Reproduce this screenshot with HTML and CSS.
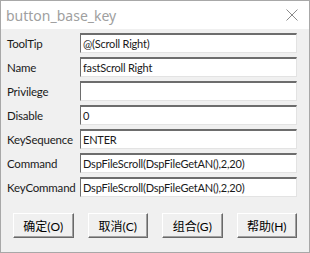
FILE: index.html
```html
<!DOCTYPE html>
<html lang="zh-CN">
<head>
  <meta charset="UTF-8" />
  <title>button_base_key</title>
  <link rel="stylesheet" href="styles.css">
</head>
<body>
  <div class="dialog">
    <div class="titlebar">
      <span class="title">button_base_key</span>
      <svg class="close" width="12" height="12" viewBox="0 0 12 12">
        <path d="M0.5 0.5 L11.5 11.5 M11.5 0.5 L0.5 11.5" stroke="#8a8a8a" stroke-width="1" fill="none"/>
      </svg>
    </div>
    <div class="content">
      <div class="fields">
        <label>ToolTip</label><div class="field">@(Scroll Right)</div>
        <label>Name</label><div class="field">fastScroll Right</div>
        <label>Privilege</label><div class="field"></div>
        <label>Disable</label><div class="field">0</div>
        <label>KeySequence</label><div class="field">ENTER</div>
        <label>Command</label><div class="field">DspFileScroll(DspFileGetAN(),2,20)</div>
        <label>KeyCommand</label><div class="field">DspFileScroll(DspFileGetAN(),2,20)</div>
      </div>
      <div class="buttons">
        <button>确定(O)</button>
        <button>取消(C)</button>
        <button>组合(G)</button>
        <button>帮助(H)</button>
      </div>
    </div>
  </div>
</body>
</html>
```

FILE: styles.css
```css
body {
  margin: 0;
  background: #f0f0f0;
}
.dialog {
  width: 310px;
  height: 253px;
  box-sizing: border-box;
  border: 1px solid #a8a8a8;
  background: #f0f0f0;
  display: flex;
  flex-direction: column;
}
.titlebar {
  height: 28px;
  background: #fff;
  display: flex;
  align-items: center;
  justify-content: space-between;
  padding: 0 11px 0 5px;
}
.title {
  font-family: "Noto Sans", sans-serif;
  font-size: 14px;
  color: #a0a0a0;
}
.content {
  padding: 4px 12px 0 6px;
}
.fields {
  display: grid;
  grid-template-columns: 73px 217px;
  row-gap: 4px;
  align-items: center;
}
.fields label {
  font-family: Lato, sans-serif;
  font-size: 11.5px;
  letter-spacing: -0.2px;
  color: #1a1a1a;
}
.field {
  height: 20px;
  box-sizing: border-box;
  background: #fff;
  border-top: 2px solid #6d6d6d;
  border-left: 1px solid #6d6d6d;
  border-right: 1px solid #e3e3e3;
  border-bottom: 1px solid #e3e3e3;
  padding: 1px 2px 0;
  font-family: Lato, sans-serif;
  font-size: 11px;
  letter-spacing: -0.2px;
  line-height: 15px;
  color: #1a1a1a;
  white-space: nowrap;
  overflow: hidden;
}
.buttons {
  display: flex;
  gap: 14px;
  padding: 16px 0 0 6px;
}
.buttons button {
  width: 61px;
  height: 25px;
  background: #f0f0f0;
  border-top: 1px solid #fff;
  border-left: 1px solid #fff;
  border-right: 1px solid #696969;
  border-bottom: 1px solid #696969;
  box-shadow: inset -1px -1px 0 #a0a0a0;
  font-family: Lato, "Noto Sans CJK SC", sans-serif;
  font-size: 12px;
  padding: 0;
  color: #000;
}
```
